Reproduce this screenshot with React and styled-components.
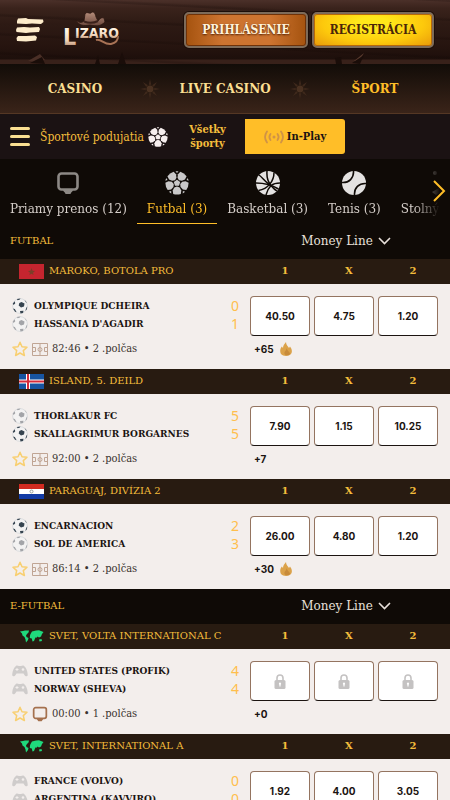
import React from "react";
import styled, { createGlobalStyle } from "styled-components";

const slab = `"DejaVu Serif", serif`;
const narrowSlab = `"DejaVu Serif Condensed", "DejaVu Serif", serif`;

const GlobalStyle = createGlobalStyle`
  * {
    box-sizing: border-box;
  }
  body {
    margin: 0;
    background: #0f0a06;
    color: #1b1411;
    font-family: ${narrowSlab};
    font-size: 11px;
    line-height: 18px;
  }
  a {
    color: inherit;
    text-decoration: none;
  }
  button {
    font-family: inherit;
    cursor: pointer;
  }
`;

const MenuLogoIcon = () => (
  <svg width="28" height="24" viewBox="0 0 28 24" fill="#fdeccb" aria-hidden="true">
    <path d="M2 .5 L10 0 L12 1 L27 1.500 L27.500 4 L25 6 L16 5.500 L10 6 L1 5.500 L1 3Z" />
    <path d="M1 9.500 L8 9 L14 9.500 L23 9 L24 11 L23 14 L14 14.500 L10 15 L.5 14 L0 12Z" />
    <path d="M2 18 L10 18 L19 17.500 L21 19 L20 22.500 L10 23.500 L1 23 L.5 20Z" />
  </svg>
);

const Logo = () => (
  <svg width="60" height="40" viewBox="0 0 60 40" role="img" aria-label="Lizaro">
    <defs>
      <linearGradient id="letters" x1="0" y1="0" x2="0" y2="1">
        <stop offset="0.3" stopColor="#fff3e2" />
        <stop offset="0.65" stopColor="#f0d2b8" />
        <stop offset="1" stopColor="#8d5c41" />
      </linearGradient>
      <linearGradient id="hat" x1="0" y1="0" x2="0" y2="1">
        <stop offset="0" stopColor="#b58d7b" />
        <stop offset="1" stopColor="#6b483c" />
      </linearGradient>
    </defs>
    <path d="M34 30 C39 28 42 35 49 34 C54 33 56 30 56 26" fill="none" stroke="#a87255" strokeWidth="2" />
    <g
      fontFamily="'DejaVu Sans Condensed', 'DejaVu Sans', sans-serif"
      fontWeight="700"
      fill="url(#letters)"
      stroke="#2a150f"
      strokeWidth="1"
      paintOrder="stroke"
    >
      <text x="1" y="35" fontSize="23">L</text>
      <text x="13" y="28" fontSize="14">IZARO</text>
    </g>
    <path
      d="M14 10 C17 13 20 13 22 11 L23 4 C25 1 27 4 29 3 C31 1 33 2 34 7 L36 11 C38 9 39 7 42 8 L43 12 C38 17 34 16 28 15 C22 16 17 16 14 10Z"
      fill="url(#hat)"
      stroke="#2a150f"
      strokeWidth="0.8"
    />
    <path d="M22 11.500 C26 13 32 13 36 11" fill="none" stroke="#3b211b" strokeWidth="2" />
  </svg>
);

const WoodChips = () => (
  <ChipsSvg width="340" height="12" viewBox="0 0 340 12" aria-hidden="true">
    <path d="M0 9 L12 2 L17 8 L8 10Z" fill="#4a2f26" />
    <path d="M2 11 L14 5 L17 12Z M67 12 L70 3 L72 12Z M90 12 L94 0 L98 12Z M307 6 L313 5 L314 12 H308Z" fill="#1a0d09" />
    <path d="M326 9 L336 1 L331 9Z" fill="#5a3b2f" />
    <path d="M324 11 L336 3 L332 12Z" fill="#1a0d09" />
  </ChipsSvg>
);

const Emblem = () => (
  <EmblemSvg width="20" height="20" viewBox="0 0 20 20" aria-hidden="true">
    {[0, 45, 90, 135].map((angle) => (
      <path key={angle} d="M10 0 L12 10 L10 20 L8 10Z" fill="#3f291c" transform={`rotate(${angle} 10 10)`} />
    ))}
    <circle cx="10" cy="10" r="4" fill="#4a3121" stroke="#2c1c12" />
  </EmblemSvg>
);

const SoccerIcon = ({ size, fill }) => (
  <svg width={size} height={size} viewBox="0 0 24 24" fill={fill} aria-hidden="true">
    <path d="M12 8.700 L15.200 11 L14 14.800 H10 L8.800 11Z" />
    {[36, 108, 180, 252, 324].map((angle) => (
      <path key={angle} d="M8.200 1 Q12 -.2 15.800 1 L16.300 4.400 L14.700 7.400 L12 8.600 L9.300 7.400 L7.700 4.400Z" transform={`rotate(${angle} 12 12)`} />
    ))}
    {[0, 72, 144, 216, 288].map((angle) => (
      <path key={angle} d="M10.500 .2 H13.500 L12 2Z" transform={`rotate(${angle} 12 12)`} />
    ))}
  </svg>
);

const BasketballIcon = () => (
  <svg width="24" height="24" viewBox="0 0 24 24" aria-hidden="true">
    <circle cx="12" cy="12" r="12" fill="#e4e2e1" />
    <g fill="none" stroke="#0f0a06" strokeWidth="1.500">
      <path d="M11 0 C10.500 6 12 11 15 14.500 C17 17 19 19 21 20" />
      <path d="M0 12 C7 12 16 14 22.500 18" />
      <path d="M18 1.500 C18 10 12 18 2.500 19.500" />
      <path d="M3 4 C7 7 10 12 15 14.500 C17 13 20 12 24 12" />
      <path d="M10 24 C11 20 12.500 17 15 14.500" />
    </g>
  </svg>
);

const TennisIcon = () => (
  <svg width="24" height="24" viewBox="0 0 24 24" aria-hidden="true">
    <circle cx="12" cy="12" r="12" fill="#e4e2e1" />
    <g fill="none" stroke="#0f0a06" strokeWidth="1.600">
      <path d="M0 11.500 C7 12 12 7 11.500 0" />
      <path d="M12.500 24 C12 17 17 12 24 12.500" />
    </g>
  </svg>
);

const TableTennisIcon = () => (
  <svg width="24" height="24" viewBox="0 0 24 24" fill="#c9c5c2" aria-hidden="true">
    <circle cx="10" cy="2" r="2" />
    <path d="M7 21 L14 17 L16 21 L11 24Z" />
  </svg>
);

const ScreenIcon = ({ size, color }) => (
  <svg width={size} height={size} viewBox="0 0 24 24" aria-hidden="true">
    <rect x="2.500" y="2.500" width="19" height="16" rx="3" fill="none" stroke={color} strokeWidth="2.600" />
    <path d="M7 19 H17 C16.500 21 15 21 14.500 23 H9.500 C9 21 7.500 21 7 19Z" fill={color} />
  </svg>
);

const ArrowRightIcon = () => (
  <svg width="13" height="22" viewBox="0 0 13 22" fill="none" stroke="#ffbe28" strokeWidth="2" aria-hidden="true">
    <path d="M1 1 L11 11 L1 21" />
  </svg>
);

const ArrowDownIcon = () => (
  <svg width="13" height="8" viewBox="0 0 13 8" fill="none" stroke="#e8e0da" strokeWidth="1.600" aria-hidden="true">
    <path d="M1 1 L6.500 6.500 L12 1" />
  </svg>
);

const LiveIcon = () => (
  <svg width="20" height="14" viewBox="0 0 20 14" fill="none" stroke="#d09346" strokeWidth="1.800" strokeLinecap="round" aria-hidden="true">
    <circle cx="10" cy="7" r="1.500" fill="#d09346" stroke="none" />
    <path d="M6.500 4 C5 6 5 8 6.500 10 M13.500 4 C15 6 15 8 13.500 10" />
    <path d="M3 1.500 C.5 5 .5 9 3 12.500 M17 1.500 C19.500 5 19.500 9 17 12.500" />
  </svg>
);

const TeamBallIcon = ({ color }) => (
  <svg width="16" height="16" viewBox="0 0 16 16" aria-hidden="true">
    <circle cx="8" cy="8" r="7.400" fill="#f3f2f2" stroke="#d6d8da" strokeWidth="0.800" />
    <g fill={color}>
      <path d="M9.500 4 L12.500 5.500 L12 8.500 L9 9.500 L6.700 7.500 L7.300 5Z" />
      <path d="M5 1 L8.500 .400 L7.500 1.800 L5.500 2.300Z" />
      <path d="M.800 5.500 L2.800 3.200 L3.200 5.500 L1.500 7Z" />
      <path d="M1 10.500 L2.800 11 L4.500 14 L3 13.800Z" />
      <path d="M8 13 L11.500 12.800 L11 15 L8.500 15.600Z" />
      <path d="M14.200 10 L15.300 8.500 L14.600 11.700 L13.400 12.800Z" />
      <path d="M12.500 1.800 L14.800 4.600 L14 4.500Z" />
    </g>
  </svg>
);

const GamepadIcon = () => (
  <svg width="16" height="12" viewBox="0 0 16 12" aria-hidden="true">
    <path d="M4 1 C5 0 6 1 7 1 H9 C10 1 11 0 12 1 C14.500 2.500 16 8 15.700 10.500 C15 12 13 11.500 11.500 8.500 H4.500 C3 11.500 1 12 .3 10.500 C0 8 1.500 2.500 4 1Z" fill="#cfcccb" />
    <path d="M3.500 4.500 H6.500 M5 3 V6" stroke="#f3eeec" strokeWidth="1" />
    <circle cx="11" cy="4.500" r="1.300" fill="#f3eeec" />
  </svg>
);

const StarIcon = () => (
  <svg width="16" height="16" viewBox="0 0 16 16" fill="none" stroke="#f8cf70" strokeWidth="1.500" strokeLinejoin="round" aria-hidden="true">
    <path d="M8 1.200 L10 5.700 L15 6.200 L11.300 9.600 L12.400 14.500 L8 12 L3.600 14.500 L4.700 9.600 L1 6.200 L6 5.700Z" />
  </svg>
);

const PitchIcon = () => (
  <svg width="16" height="13" viewBox="0 0 16 13" fill="none" stroke="#c0a594" aria-hidden="true">
    <path d="M.5 .5 H15.500 V12.500 H.5Z M8 .5 V12.500 M.5 4.500 H3.500 V8.500 H.5 M15.500 4.500 H12.500 V8.500 H15.500" />
    <circle cx="8" cy="6.500" r="2" />
  </svg>
);

const FlameIcon = () => (
  <svg width="12" height="14" viewBox="0 0 12 14" aria-hidden="true">
    <path d="M6 0 C6 3 8 4 9 6 L10 4.500 C12 7 12.500 10 11 12 C9 14.500 3 14.500 1 12 C-.5 9.500 .3 6.500 1.800 4.500 L3 6 C3 3.500 4.500 2 6 0Z" fill="#dba24a" />
    <path d="M6.500 6 C6.500 9 4 9 4.500 12 C5.500 14 9 13.500 10 12 C10 10 7.500 9 6.500 6Z" fill="#c88b3b" />
  </svg>
);

const LockIcon = () => (
  <svg width="12" height="15" viewBox="0 0 12 15" role="img" aria-label="Uzamknuté">
    <path d="M3 7 V4 A3 3 0 0 1 9 4 V7" fill="none" stroke="#c4c2c2" strokeWidth="1.600" />
    <rect x="0.500" y="6" width="11" height="9" rx="1.500" fill="#c4c2c2" />
    <path d="M6 8.500 A1.200 1.200 0 0 1 6.600 10.700 V12.500 H5.400 V10.700 A1.200 1.200 0 0 1 6 8.500Z" fill="#fff" />
  </svg>
);

const flags = {
  morocco: (
    <svg width="25" height="15" viewBox="0 0 25 15" aria-hidden="true">
      <rect width="25" height="15" fill="#c5252f" />
      <path d="M12.500 4 L13.600 6.800 L16 7 L14 8.700 L14.600 11 L12.500 9.700 L10.400 11 L11 8.700 L9 7 L11.400 6.800Z" fill="#7b3f28" />
    </svg>
  ),
  iceland: (
    <svg width="25" height="15" viewBox="0 0 25 15" aria-hidden="true">
      <rect width="25" height="15" fill="#1754a1" />
      <path d="M9 0 V15 M0 7.500 H25" stroke="#fff" strokeWidth="4" />
      <path d="M9 0 V15 M0 7.500 H25" stroke="#d52b3a" strokeWidth="2" />
    </svg>
  ),
  paraguay: (
    <svg width="25" height="15" viewBox="0 0 25 15" aria-hidden="true">
      <rect width="25" height="15" fill="#fff" />
      <rect width="25" height="5" fill="#d22b20" />
      <rect y="10" width="25" height="5" fill="#123ba5" />
      <circle cx="12.500" cy="7.500" r="1.500" fill="none" stroke="#9aa19a" />
    </svg>
  ),
  world: (
    <svg width="25" height="15" viewBox="0 0 25 15" fill="#1fd97c" aria-hidden="true">
      <path d="M1 2.500 L4 2 L6 1.500 L10 1.500 L9.500 3.500 L8 5 L7 6.500 L7.500 8 L9.500 9 L9 11 L7 13.500 L6.500 10.500 L5.500 8 L3.500 6.500 L3 4.500Z" />
      <path d="M11.500 5 L13 2.500 L17 1.500 L20 1.200 L24.500 3 L23 5 L22 7.500 L20 8.500 L18.500 7.500 L17.500 9 L17 8 L16 9.500 L15 12 L13.500 12.500 L12.800 9.500 L10.800 9 L11 6.500Z" />
      <path d="M20 10.500 L22.500 10 L23 12 L20.500 12.500Z" />
    </svg>
  ),
};

const sections = [
  {
    name: "FUTBAL",
    leagues: [
      {
        name: "MAROKO, BOTOLA PRO",
        flag: "morocco",
        teams: [["OLYMPIQUE DCHEIRA", 0, "#35434f"], ["HASSANIA D'AGADIR", 1, "#a3a4a8"]],
        info: "82:46 • 2 .polčas",
        odds: ["40.50", "4.75", "1.20"],
        more: "+65",
        hot: true,
      },
      {
        name: "ISLAND, 5. DEILD",
        flag: "iceland",
        teams: [["THORLAKUR FC", 5, "#a3a4a8"], ["SKALLAGRIMUR BORGARNES", 5, "#35434f"]],
        info: "92:00 • 2 .polčas",
        odds: ["7.90", "1.15", "10.25"],
        more: "+7",
      },
      {
        name: "PARAGUAJ, DIVÍZIA 2",
        flag: "paraguay",
        teams: [["ENCARNACION", 2, "#35434f"], ["SOL DE AMERICA", 3, "#a3a4a8"]],
        info: "86:14 • 2 .polčas",
        odds: ["26.00", "4.80", "1.20"],
        more: "+30",
        hot: true,
      },
    ],
  },
  {
    name: "E-FUTBAL",
    leagues: [
      {
        name: "SVET, VOLTA INTERNATIONAL C",
        flag: "world",
        esport: true,
        teams: [["UNITED STATES (PROFIK)", 4], ["NORWAY (SHEVA)", 4]],
        info: "00:00 • 1 .polčas",
        odds: [null, null, null],
        more: "+0",
      },
      {
        name: "SVET, INTERNATIONAL A",
        flag: "world",
        esport: true,
        teams: [["FRANCE (VOLVO)", 0], ["ARGENTINA (KAVVIRO)", 0]],
        info: "00:00 • 1 .polčas",
        odds: ["1.92", "4.00", "3.05"],
        more: "+0",
      },
    ],
  },
];

const tabs = [
  { label: "Priamy prenos (12)", icon: <ScreenIcon size={24} color="#8d8985" /> },
  { label: "Futbal (3)", icon: <SoccerIcon size={24} fill="#c9c8c8" />, active: true },
  { label: "Basketbal (3)", icon: <BasketballIcon /> },
  { label: "Tenis (3)", icon: <TennisIcon /> },
  { label: "Stolný tenis", icon: <TableTennisIcon /> },
];

const Match = ({ league }) => (
  <MatchCard>
    <MatchInfo>
      {league.teams.map(([name, score, color]) => (
        <Team key={name}>
          <TeamIcon>{league.esport ? <GamepadIcon /> : <TeamBallIcon color={color} />}</TeamIcon>
          <TeamName>{name}</TeamName>
          <Score>{score}</Score>
        </Team>
      ))}
      <MatchTime>
        <IconButton aria-label="Pridať k obľúbeným">
          <StarIcon />
        </IconButton>
        {league.esport ? <ScreenIcon size={16} color="#a5714e" /> : <PitchIcon />}
        <span>{league.info}</span>
      </MatchTime>
    </MatchInfo>
    <Markets>
      <OddsGrid>
        {league.odds.map((odd, i) => (
          <OddButton key={i} disabled={!odd}>
            {odd || <LockIcon />}
          </OddButton>
        ))}
      </OddsGrid>
      <MoreLink href="#more">
        {league.more}
        {league.hot && <FlameIcon />}
      </MoreLink>
    </Markets>
  </MatchCard>
);

const App = () => {
  return (
    <Page>
      <GlobalStyle />
      <Header>
        <WoodChips />
        <Brand>
          <IconButton aria-label="Menu">
            <MenuLogoIcon />
          </IconButton>
          <a href="#home">
            <Logo />
          </a>
        </Brand>
        <Actions>
          <AuthButton>PRIHLÁSENIE</AuthButton>
          <AuthButton $gold>REGISTRÁCIA</AuthButton>
        </Actions>
      </Header>
      <MainNav>
        <NavLink href="#casino">CASINO</NavLink>
        <Emblem />
        <NavLink href="#live">LIVE CASINO</NavLink>
        <Emblem />
        <NavLink href="#sport" $active>
          ŠPORT
        </NavLink>
      </MainNav>
      <Toolbar>
        <EventsButton>
          <Bars>
            <span />
            <span />
            <span />
          </Bars>
          Športové podujatia
          <SoccerIcon size={20} fill="#f6eeee" />
        </EventsButton>
        <AllSports href="#all">Všetky športy</AllSports>
        <InPlayButton>
          <LiveIcon />
          In-Play
        </InPlayButton>
      </Toolbar>
      <SportTabs>
        <TabList>
          {tabs.map((tab) => (
            <Tab key={tab.label} $active={tab.active}>
              {tab.icon}
              {tab.label}
            </Tab>
          ))}
        </TabList>
        <ScrollButton aria-label="Ďalej">
          <ArrowRightIcon />
        </ScrollButton>
      </SportTabs>
      {sections.map((section) => (
        <section key={section.name}>
          <SectionHeader>
            <SectionTitle>{section.name}</SectionTitle>
            <MarketButton>
              Money Line
              <ArrowDownIcon />
            </MarketButton>
          </SectionHeader>
          {section.leagues.map((league) => (
            <article key={league.name}>
              <LeagueHeader>
                {flags[league.flag]}
                <LeagueName>{league.name}</LeagueName>
                <Outcomes>
                  <span>1</span>
                  <span>X</span>
                  <span>2</span>
                </Outcomes>
              </LeagueHeader>
              <Match league={league} />
            </article>
          ))}
        </section>
      ))}
    </Page>
  );
};

const Page = styled.div`
  height: 100vh;
  overflow: hidden;
`;

const Header = styled.header`
  position: relative;
  display: flex;
  justify-content: space-between;
  align-items: center;
  height: 64px;
  padding: 0 16px 4px;
  background: repeating-linear-gradient(3deg, transparent 0 9px, rgba(16, 6, 4, 0.2) 10px 11px, transparent 13px 19px),
    linear-gradient(#4b3029 0, #3a231c 8px, #2d1a14 24px, #26140f 46px, #1d0f0b 59px, #38211a 60px, #38211a 64px);
`;

const ChipsSvg = styled.svg`
  position: absolute;
  left: 28px;
  bottom: 0;
`;

const Brand = styled.div`
  display: flex;
  align-items: center;
  gap: 18px;

  a {
    display: flex;
  }
`;

const IconButton = styled.button`
  display: flex;
  padding: 0;
  border: 0;
  background: none;
`;

const Actions = styled.div`
  display: flex;
  gap: 4px;
`;

const AuthButton = styled.button`
  height: 36px;
  width: ${(props) => (props.$gold ? "122px" : "124px")};
  padding: 0;
  border: 2px solid #7d6b5a;
  border-radius: 5px;
  font-size: 12px;
  font-weight: 700;
  white-space: nowrap;
  color: ${(props) => (props.$gold ? "#4a2608" : "#fff3dc")};
  text-shadow: ${(props) => (props.$gold ? "none" : "0 1px 2px #4a1d04")};
  background: ${(props) =>
    props.$gold
      ? "radial-gradient(ellipse at 50% 30%, #ffe81a 20%, #fdc90c 60%, #e8980a)"
      : "linear-gradient(90deg, #a5530f, #cd7430 30%, #cd7430 70%, #a5530f)"};
  box-shadow: inset 0 0 0 1px ${(props) => (props.$gold ? "#b86a08" : "#6f3208")}, 0 0 0 1px #1c0e09;
`;

const MainNav = styled.nav`
  display: flex;
  align-items: center;
  height: 50px;
  border-bottom: 1px solid #553724;
  background: linear-gradient(#120c08, #3a2419);
`;

const EmblemSvg = styled.svg`
  flex: none;
  margin: 0 -10px;
`;

const NavLink = styled.a`
  flex: 1;
  font-size: 12px;
  font-weight: 700;
  font-family: ${slab};
  text-align: center;
  && {
    color: ${(props) => (props.$active ? "#ffbe28" : "#fbdf92")};
  }
`;

const Toolbar = styled.div`
  display: flex;
  align-items: center;
  height: 45px;
  padding-left: 10px;
  background: #1b1213;
`;

const EventsButton = styled.button`
  display: flex;
  align-items: center;
  gap: 4px;
  width: 160px;
  padding: 0;
  border: 0;
  background: none;
  color: #f4bd3c;
  font-size: 12px;
  white-space: nowrap;
`;

const Bars = styled.span`
  display: grid;
  gap: 5px;
  margin-right: 6px;

  span {
    width: 20px;
    height: 3px;
    border-radius: 2px;
    background: #fbdf92;
  }
`;

const AllSports = styled.a`
  width: 75px;
  padding: 0 16px;
  line-height: 14px;
  font-weight: 700;
  text-align: center;
  && {
    color: #f4bd3c;
  }
`;

const InPlayButton = styled.button`
  display: flex;
  justify-content: center;
  align-items: center;
  gap: 3px;
  width: 100px;
  height: 35px;
  padding: 0;
  border: 0;
  border-radius: 0 3px 3px 0;
  background: #ffbe28;
  color: #1b1213;
  font-size: 11px;
  font-weight: 700;
`;

const SportTabs = styled.div`
  position: relative;
`;

const TabList = styled.div`
  display: flex;
  height: 65px;
  margin-right: 10px;
  overflow: hidden;
  mask-image: linear-gradient(90deg, #000 94%, transparent);
`;

const Tab = styled.button`
  display: flex;
  flex: none;
  flex-direction: column;
  align-items: center;
  gap: 5px;
  height: 65px;
  padding: 12px 10px 0;
  border: 0;
  border-bottom: 1px solid ${(props) => (props.$active ? "#ffbe28" : "transparent")};
  background: none;
  color: ${(props) => (props.$active ? "#ffbe28" : "#d6cfca")};
  font-family: ${slab};
  font-size: 12px;
  line-height: 18px;
`;

const ScrollButton = styled(IconButton)`
  position: absolute;
  top: 21px;
  right: 4px;
`;

const SectionHeader = styled.div`
  display: flex;
  justify-content: space-between;
  align-items: center;
  height: 35px;
  padding: 0 10px 2px;
  background: #0f0a06;
  font-family: ${slab};
`;

const SectionTitle = styled.h2`
  margin: 0;
  color: #f4bd3c;
  font-size: 10px;
  font-weight: 400;
`;

const MarketButton = styled.button`
  display: flex;
  justify-content: center;
  align-items: center;
  gap: 5px;
  width: 188px;
  padding: 0;
  border: 0;
  background: none;
  color: #e8e0da;
  font-size: 12px;
`;

const LeagueHeader = styled.div`
  display: flex;
  align-items: center;
  height: 25px;
  padding: 0 7px 1px 19px;
  background: #281b11;
  color: #f4bd3c;
  font-family: ${slab};
`;

const LeagueName = styled.h3`
  flex: 1;
  margin: 0 0 0 5px;
  font-size: 10px;
  font-weight: 400;
  white-space: nowrap;
`;

const Outcomes = styled.div`
  display: grid;
  grid-template-columns: repeat(3, 60px);
  gap: 4px;
  font-size: 10px;
  font-weight: 700;
  text-align: center;
`;

const MatchCard = styled.div`
  display: flex;
  height: 85px;
  padding: 12px 12px 0;
  background: #f3eeec;
`;

const MatchInfo = styled.div`
  flex: 1;
  padding-top: 1px;
`;

const Team = styled.div`
  display: flex;
  align-items: center;
  height: 18px;
`;

const TeamIcon = styled.span`
  display: flex;
  width: 22px;
`;

const TeamName = styled.span`
  flex: 1;
  font-size: 10px;
  font-weight: 700;
  white-space: nowrap;
`;

const Score = styled.span`
  width: 10px;
  margin-right: 10px;
  color: #ffbe4d;
  font-family: "Noto Sans", sans-serif;
  font-size: 14px;
  text-align: center;
`;

const MatchTime = styled.div`
  display: flex;
  align-items: center;
  gap: 4px;
  margin-top: 7px;
  color: #3a332f;
  white-space: nowrap;
`;

const Markets = styled.div`
  width: 188px;
`;

const OddsGrid = styled.div`
  display: grid;
  grid-template-columns: repeat(3, 60px);
  gap: 4px;
`;

const OddButton = styled.button`
  display: flex;
  justify-content: center;
  align-items: center;
  height: 40px;
  padding: 0;
  border: 1px solid #947460;
  border-bottom-color: #1b1411;
  border-radius: 4px;
  background: #fff;
  color: #1b1411;
  font-family: Inter, sans-serif;
  font-size: 10px;
  font-weight: 700;
`;

const MoreLink = styled.a`
  display: flex;
  align-items: center;
  gap: 6px;
  height: 26px;
  padding-left: 4px;
  font-family: Inter, sans-serif;
  font-size: 10px;
  font-weight: 700;
`;

export default App;
